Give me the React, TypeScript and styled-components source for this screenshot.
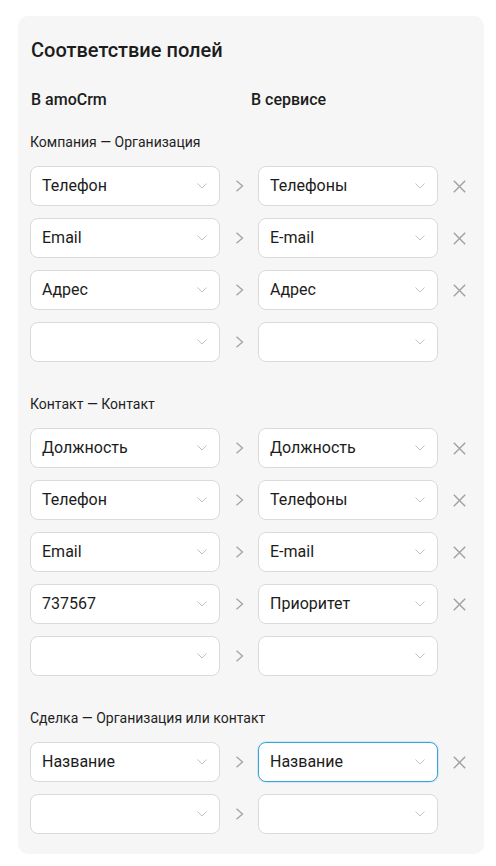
import React from "react";
import styled, { createGlobalStyle } from "styled-components";

const Global = createGlobalStyle`
  html, body { margin: 0; padding: 0; background: #ffffff; }
  body { font-family: Roboto, "Noto Sans", Arial, sans-serif; color: #1f1f1f; }
`;

const Page = styled.div`
  padding: 16px 12px 12px 18px;
`;

const Card = styled.div`
  background: #f6f6f6;
  border-radius: 10px;
  padding: 22px 12px 20px 12px;
`;

const Title = styled.h2`
  margin: 0 0 0 1px;
  font-size: 20px;
  line-height: 24px;
  font-weight: 500;
  color: #1c1c1c;
`;

const Headers = styled.div`
  margin-top: 28px;
  display: grid;
  grid-template-columns: 220px 1fr;
  padding-left: 1px;
`;

const HeaderText = styled.div`
  font-size: 16px;
  line-height: 20px;
  font-weight: 500;
  color: #1c1c1c;
`;

const SectionLabel = styled.div<{ $gap: number }>`
  margin-top: ${(p) => p.$gap}px;
  font-size: 14px;
  line-height: 19px;
  color: #1f1f1f;
`;

const Rows = styled.div`
  margin-top: 14px;
  display: flex;
  flex-direction: column;
  gap: 12px;
`;

const Row = styled.div`
  display: grid;
  grid-template-columns: 190px 38px 180px 1fr;
  align-items: center;
  height: 40px;
`;

const Select = styled.div<{ $focused?: boolean }>`
  box-sizing: border-box;
  height: 40px;
  background: #fff;
  border: 1px solid ${(p) => (p.$focused ? "#3aa5da" : "#dadada")};
  box-shadow: ${(p) => (p.$focused ? "0 0 0 1px rgba(58,165,218,0.18)" : "none")};
  border-radius: 8px;
  display: flex;
  align-items: center;
  padding: 0 12px 1px 11px;
  font-size: 16px;
  color: #1c1c1c;
`;

const SelectValue = styled.span`
  flex: 1;
  white-space: nowrap;
`;

const Chevron = styled.svg`
  width: 10px;
  height: 6px;
  flex: none;
`;

const ArrowCell = styled.div`
  display: flex;
  justify-content: center;
  align-items: center;
`;

const RemoveCell = styled.div`
  display: flex;
  align-items: center;
  padding-left: 15px;
`;

const ChevronDown = () => (
  <Chevron viewBox="0 0 10 6">
    <path d="M0.5 0.5 L5 5 L9.5 0.5" fill="none" stroke="#c2c2c2" strokeWidth="1" />
  </Chevron>
);

const ArrowRight = () => (
  <svg width="9" height="12" viewBox="0 0 9 12">
    <path d="M1.5 0.8 L7.5 6 L1.5 11.2" fill="none" stroke="#a3a3a3" strokeWidth="1.3" />
  </svg>
);

const Cross = () => (
  <svg width="13" height="13" viewBox="0 0 13 13">
    <path d="M0.8 0.8 L12.2 12.2 M12.2 0.8 L0.8 12.2" fill="none" stroke="#a0a0a0" strokeWidth="1.4" />
  </svg>
);

type Pair = { left: string; right: string; focused?: boolean };

const sections: { label: string; gap: number; rows: Pair[] }[] = [
  {
    label: "Компания — Организация",
    gap: 23,
    rows: [
      { left: "Телефон", right: "Телефоны" },
      { left: "Email", right: "E-mail" },
      { left: "Адрес", right: "Адрес" },
      { left: "", right: "" },
    ],
  },
  {
    label: "Контакт — Контакт",
    gap: 33,
    rows: [
      { left: "Должность", right: "Должность" },
      { left: "Телефон", right: "Телефоны" },
      { left: "Email", right: "E-mail" },
      { left: "737567", right: "Приоритет" },
      { left: "", right: "" },
    ],
  },
  {
    label: "Сделка — Организация или контакт",
    gap: 33,
    rows: [
      { left: "Название", right: "Название", focused: true },
      { left: "", right: "" },
    ],
  },
];

export default function App() {
  return (
    <>
      <Global />
      <Page>
        <Card>
          <Title>Соответствие полей</Title>
          <Headers>
            <HeaderText>В amoCrm</HeaderText>
            <HeaderText>В сервисе</HeaderText>
          </Headers>
          {sections.map((s) => (
            <React.Fragment key={s.label}>
              <SectionLabel $gap={s.gap}>{s.label}</SectionLabel>
              <Rows>
                {s.rows.map((r, i) => {
                  const filled = r.left !== "" || r.right !== "";
                  return (
                    <Row key={i}>
                      <Select>
                        <SelectValue>{r.left}</SelectValue>
                        <ChevronDown />
                      </Select>
                      <ArrowCell>
                        <ArrowRight />
                      </ArrowCell>
                      <Select $focused={r.focused}>
                        <SelectValue>{r.right}</SelectValue>
                        <ChevronDown />
                      </Select>
                      <RemoveCell>{filled && <Cross />}</RemoveCell>
                    </Row>
                  );
                })}
              </Rows>
            </React.Fragment>
          ))}
        </Card>
      </Page>
    </>
  );
}
